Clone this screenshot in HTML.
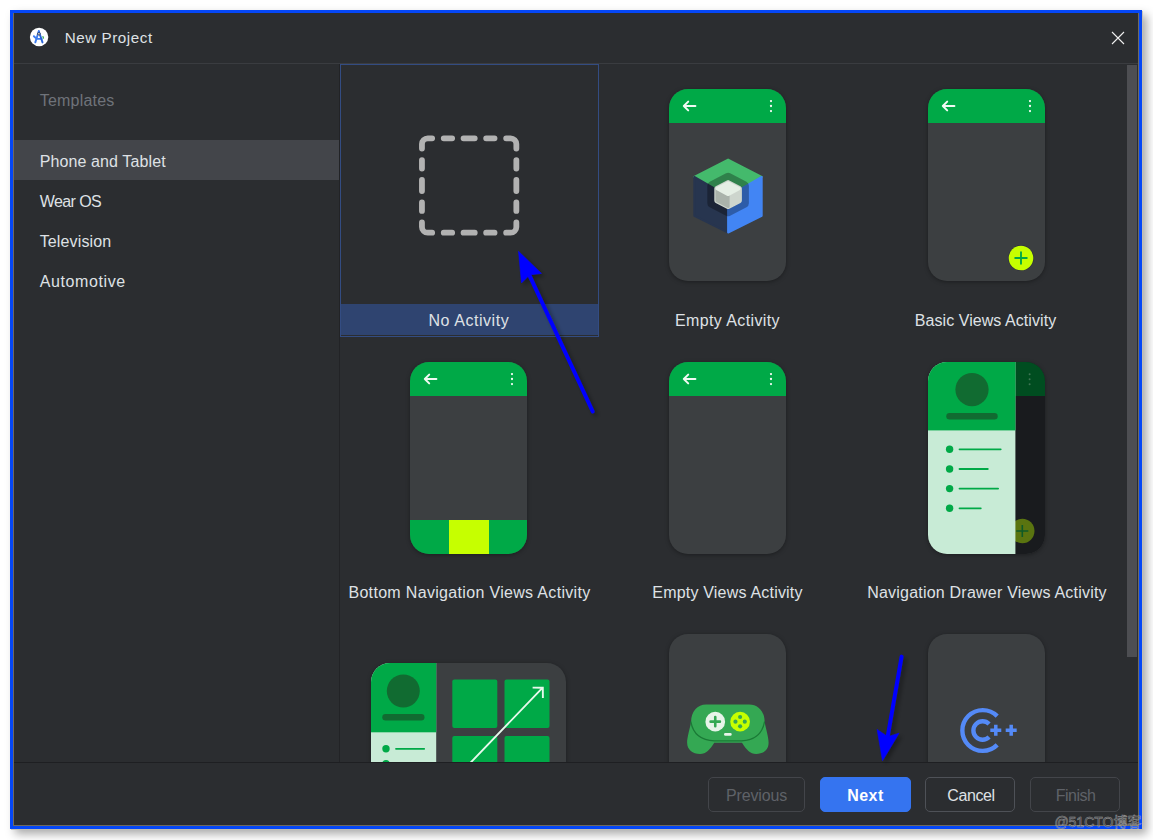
<!DOCTYPE html>
<html lang="en">
<head>
<meta charset="utf-8">
<title>New Project</title>
<style>
*{box-sizing:border-box;margin:0;padding:0}
html,body{width:1153px;height:840px;overflow:hidden;background:#fff}
body{position:relative;font-family:"Liberation Sans","Noto Sans CJK SC",sans-serif;font-size:16px;color:#DFE1E5}
.win{position:absolute;left:10px;top:10px;width:1132px;height:819px;background:#0547F6;box-shadow:1px 1px 0 0 rgba(196,192,178,.85),5px 5px 9px rgba(0,0,0,.34)}
.inner{position:absolute;left:3px;top:3px;width:1126px;height:813px;background:#2B2D30;overflow:hidden}
.edge{position:absolute;left:0;top:0;width:1126px;height:813px;border:1px solid #6E6A60;border-top:none;pointer-events:none}
.abs{position:absolute}
.t{position:absolute;white-space:nowrap;line-height:20px;height:20px}
.titlesep{position:absolute;left:1px;top:50px;width:1124px;height:1px;background:#3A3C40}
.side-sel{position:absolute;left:1px;top:127px;width:325px;height:40px;background:#43454A}
.cell-sel{position:absolute;left:327px;top:51px;width:259px;height:273px;border:1px solid #334C82}
.cell-sel .bar{position:absolute;left:0;top:239px;width:257px;height:31px;background:#2F4470}
.lbl{position:absolute;white-space:nowrap;line-height:20px;height:20px;text-align:center;color:#DFE1E5}
.phone{position:absolute;width:117px;height:192.2px;border-radius:19px;background:#3C3F41;overflow:hidden;box-shadow:0 1px 4px rgba(0,0,0,.35)}
.phone .hd{position:absolute;left:0;top:0;width:100%;height:34px;background:#00A947}
.scroll{position:absolute;left:1114px;top:52px;width:10px;height:592px;background:#4D4E52}
.footer{position:absolute;left:1px;top:749px;width:1124px;height:64px;background:#2B2D30;border-top:1px solid #1E1F22}
.btn{position:absolute;top:764px;height:35px;border-radius:5px;border:1px solid #4E5157;color:#DFE1E5;text-align:center;line-height:35px;font-size:16px}
.btn.dis{color:#5F6268;border-color:#43454A}
.btn.pri{background:#3574F0;border-color:#3574F0;color:#fff;font-weight:bold}
</style>
</head>
<body>
<div class="win"><div class="inner">

<!-- title bar -->
<svg class="abs" style="left:16px;top:14px" width="20" height="20" viewBox="0 0 20 20">
  <circle cx="10.1" cy="10" r="9.2" fill="#fff"/>
  <path d="M9.8 4.3 L6.3 15.4 M7.2 11.9 H12.6 M4.9 9.2 L7.4 11.6" fill="none" stroke="#3D7DF0" stroke-width="1.9" stroke-linecap="round"/>
  <path d="M9.8 4.3 L13.5 15.4" fill="none" stroke="#2A63D8" stroke-width="1.9" stroke-linecap="round"/>
  <path d="M9.8 3.7 L8.8 6.8 H10.8 Z" fill="#3D7DF0" stroke="#3D7DF0" stroke-width=".8" stroke-linejoin="round"/>
  <rect x="8.5" y="5.9" width="2.7" height="1.9" rx=".6" fill="#fff" stroke="#1F2430" stroke-width=".8"/>
  <path d="M13.2 8.9 l1.6 .5 .3 2.4 -1.3 -.3 z" fill="#3DAE54"/>
</svg>
<div class="t" id="ttl" style="left:51.7px;top:15px;font-size:15.2px;letter-spacing:0.56px">New Project</div>
<svg class="abs" style="left:1098px;top:18px" width="14" height="14" viewBox="0 0 14 14"><path d="M1 1 L13 13 M13 1 L1 13" stroke="#F0F0F0" stroke-width="1.1" fill="none"/></svg>
<div class="titlesep"></div>

<!-- sidebar -->
<div class="side-sel"></div>
<div class="t" id="s0" style="left:26.7px;top:78px;color:#6F737A;letter-spacing:0.21px">Templates</div>
<div class="t" id="s1" style="left:26.7px;top:139px;letter-spacing:0.11px">Phone and Tablet</div>
<div class="t" id="s2" style="left:26.7px;top:179px;letter-spacing:-0.57px">Wear OS</div>
<div class="t" id="s3" style="left:26.7px;top:219px;letter-spacing:0.14px">Television</div>
<div class="t" id="s4" style="left:26.7px;top:259px;letter-spacing:0.61px">Automotive</div>

<!-- grid -->
<div class="abs" style="left:326px;top:51px;width:1px;height:698px;background:#222326"></div>
<div class="cell-sel"><div class="bar"></div></div>
<svg class="abs" style="left:401px;top:117px" width="110" height="110" viewBox="0 0 110 110"><g transform="translate(55.15 55.5)" fill="none" stroke="#B2B2B2" stroke-width="5.8" stroke-linecap="round"><path d="M-47.2 -37 V-41.4 A5.8 5.8 0 0 1 -41.4 -47.2 H-37 M-25.4 -47.2 H-17 M-5.6 -47.2 H5.6 M17 -47.2 H25.4"/><g transform="rotate(90)"><path d="M-47.2 -37 V-41.4 A5.8 5.8 0 0 1 -41.4 -47.2 H-37 M-25.4 -47.2 H-17 M-5.6 -47.2 H5.6 M17 -47.2 H25.4"/></g><g transform="rotate(180)"><path d="M-47.2 -37 V-41.4 A5.8 5.8 0 0 1 -41.4 -47.2 H-37 M-25.4 -47.2 H-17 M-5.6 -47.2 H5.6 M17 -47.2 H25.4"/></g><g transform="rotate(270)"><path d="M-47.2 -37 V-41.4 A5.8 5.8 0 0 1 -41.4 -47.2 H-37 M-25.4 -47.2 H-17 M-5.6 -47.2 H5.6 M17 -47.2 H25.4"/></g></g></svg>

<div class="lbl" id="l0" style="left:326.4px;width:259px;top:298px;letter-spacing:0.55px">No Activity</div>
<div class="lbl" id="l1" style="left:585.5px;width:258px;top:298px;letter-spacing:0.39px">Empty Activity</div>
<div class="lbl" id="l2" style="left:843.5px;width:258px;top:298px;letter-spacing:0.06px">Basic Views Activity</div>
<div class="lbl" id="l3" style="left:327.5px;width:258px;top:570px;letter-spacing:0.325px">Bottom Navigation Views Activity</div>
<div class="lbl" id="l4" style="left:585.5px;width:258px;top:570px;letter-spacing:0.2px">Empty Views Activity</div>
<div class="lbl" id="l5" style="left:845px;width:258px;top:570px;letter-spacing:0.22px">Navigation Drawer Views Activity</div>

<!-- phones row 1 -->
<div class="phone" style="left:656.4px;top:76.2px"><div class="hd"></div><svg class="abs" style="left:0;top:0" width="117" height="34" viewBox="0 0 117 34"><path d="M14.8 17 H26.4 M19.2 12.6 L14.8 17 L19.2 21.4" fill="none" stroke="#F1FAF4" stroke-width="2" stroke-linecap="round" stroke-linejoin="round"/><circle cx="102" cy="12.1" r="1.15" fill="#F1FAF4"/><circle cx="102" cy="17" r="1.15" fill="#F1FAF4"/><circle cx="102" cy="22.1" r="1.15" fill="#F1FAF4"/></svg><svg class="abs" style="left:0;top:0" width="117" height="193" viewBox="0 0 117 193">
<defs><clipPath id="hexc"><path d="M58.3 70.6 L91.9 87.9 V126.8 L58.3 143.6 L24.5 126.8 V87.9 Z" stroke-linejoin="round"/></clipPath></defs>
<g transform="translate(0.8 0)"><g stroke-linejoin="round" stroke-width="2">
<path d="M58.3 70.6 L91.9 87.9 L58.3 107.3 L24.5 87.9 Z" fill="#44BA6C" stroke="#44BA6C"/>
<path d="M24.5 87.9 L58.3 107.3 V143.6 L24.5 126.8 Z" fill="#27354F" stroke="#27354F"/>
<path d="M91.9 87.9 L58.3 107.3 V143.6 L91.9 126.8 Z" fill="#4285F4" stroke="#4285F4"/>
</g>
<g opacity=".3"><path d="M58.3 88.3 L74.6 96.8 V114.3 L58.3 122.8 L42 114.3 V96.8 Z" fill="#000" stroke="#000" stroke-width="9" stroke-linejoin="round"/></g>
<defs><filter id="sb" x="-20%" y="-20%" width="140%" height="140%"><feGaussianBlur stdDeviation="0.7"/></filter>
<clipPath id="cubec"><path d="M58.3 91.1 L71.9 98.2 V113 L58.3 120.1 L44.7 113 V98.2 Z"/></clipPath></defs>
<path d="M58.3 93.8 L69.4 99.6 V111.6 L58.3 117.4 L47.2 111.6 V99.6 Z" fill="#CDD5CD" stroke="#CDD5CD" stroke-width="5.4" stroke-linejoin="round"/>
<g filter="url(#sb)" stroke-linejoin="round" stroke-width="3">
<path d="M47.2 100.6 L58.3 106.6 V117.4 L47.2 111.6 Z" fill="#AAB3AB" stroke="#AAB3AB"/>
<path d="M58.3 93.8 L69.4 99.6 L58.3 105.6 L47.2 99.6 Z" fill="#E5EFE5" stroke="#E5EFE5"/>
</g>
</g></svg></div>
<div class="phone" style="left:914.8px;top:76.2px"><div class="hd"></div><svg class="abs" style="left:0;top:0" width="117" height="34" viewBox="0 0 117 34"><path d="M14.8 17 H26.4 M19.2 12.6 L14.8 17 L19.2 21.4" fill="none" stroke="#F1FAF4" stroke-width="2" stroke-linecap="round" stroke-linejoin="round"/><circle cx="102" cy="12.1" r="1.15" fill="#F1FAF4"/><circle cx="102" cy="17" r="1.15" fill="#F1FAF4"/><circle cx="102" cy="22.1" r="1.15" fill="#F1FAF4"/></svg><svg class="abs" style="left:79.6px;top:154.5px" width="28" height="28" viewBox="0 0 28 28"><circle cx="14" cy="14" r="12.9" fill="#22233a" fill-opacity=".55"/><circle cx="14" cy="14" r="12.3" fill="#C6FF00"/><path d="M14 8.2 V19.8 M8.2 14 H19.8" stroke="#00A947" stroke-width="1.9" stroke-linecap="round" fill="none"/></svg></div>
<!-- phones row 2 -->
<div class="phone" style="left:397.4px;top:348.7px"><div class="hd"></div><svg class="abs" style="left:0;top:0" width="117" height="34" viewBox="0 0 117 34"><path d="M14.8 17 H26.4 M19.2 12.6 L14.8 17 L19.2 21.4" fill="none" stroke="#F1FAF4" stroke-width="2" stroke-linecap="round" stroke-linejoin="round"/><circle cx="102" cy="12.1" r="1.15" fill="#F1FAF4"/><circle cx="102" cy="17" r="1.15" fill="#F1FAF4"/><circle cx="102" cy="22.1" r="1.15" fill="#F1FAF4"/></svg><div class="abs" style="left:0;top:158.6px;width:117px;height:34px;background:#00A947"></div><div class="abs" style="left:38.8px;top:158.6px;width:40px;height:34px;background:#C6FF00"></div></div>
<div class="phone" style="left:656.4px;top:348.7px"><div class="hd"></div><svg class="abs" style="left:0;top:0" width="117" height="34" viewBox="0 0 117 34"><path d="M14.8 17 H26.4 M19.2 12.6 L14.8 17 L19.2 21.4" fill="none" stroke="#F1FAF4" stroke-width="2" stroke-linecap="round" stroke-linejoin="round"/><circle cx="102" cy="12.1" r="1.15" fill="#F1FAF4"/><circle cx="102" cy="17" r="1.15" fill="#F1FAF4"/><circle cx="102" cy="22.1" r="1.15" fill="#F1FAF4"/></svg></div>
<div class="phone" style="left:914.8px;top:348.7px"><svg class="abs" style="left:0;top:0" width="117" height="193" viewBox="0 0 117 193">
<rect x="0" y="0" width="117" height="193" fill="#191B1E"/>
<rect x="0" y="0" width="117" height="34" fill="#004D20"/>
<g fill="#3E7554"><circle cx="101.6" cy="12.3" r="1"/><circle cx="101.6" cy="17.3" r="1"/><circle cx="101.6" cy="22.3" r="1"/></g>
<circle cx="94.3" cy="169" r="12.2" fill="#5A7410"/>
<path d="M94.3 163 V175 M88.3 169 H100.3" stroke="#0F5A27" stroke-width="1.6" fill="none"/>
<rect x="0" y="0" width="87.4" height="193" fill="#C8EBD6"/>
<rect x="0" y="0" width="87.4" height="68.4" fill="#00A947"/>
<circle cx="44" cy="27.6" r="16.6" fill="#116B31"/>
<rect x="18.3" y="51" width="51.4" height="6.4" rx="3.2" fill="#116B31"/>
<g fill="#00A947"><circle cx="21.6" cy="87.3" r="3.7"/><circle cx="21.6" cy="107" r="3.7"/><circle cx="21.6" cy="126.6" r="3.7"/><circle cx="21.6" cy="146.3" r="3.7"/></g>
<g stroke="#00A947" stroke-width="1.8" stroke-linecap="round"><path d="M31.5 87.3 H72.7"/><path d="M31.5 107 H59.8"/><path d="M31.5 126.6 H70.1"/><path d="M31.5 146.3 H52.8"/></g>
</svg></div>
<!-- row 3 -->
<div class="phone" style="left:357.9px;top:650.4px;width:195.4px"><svg class="abs" style="left:0;top:0" width="196" height="193" viewBox="0 0 196 193">
<rect x="0" y="0" width="65.2" height="193" fill="#C8EBD6"/>
<rect x="0" y="0" width="65.2" height="69.3" fill="#00A947"/>
<circle cx="32.3" cy="28" r="16.5" fill="#116B31"/>
<rect x="11.3" y="51" width="42.2" height="6.4" rx="3.2" fill="#116B31"/>
<g fill="#00A947"><circle cx="15" cy="85.8" r="3.7"/><circle cx="15" cy="100.6" r="3.7"/></g>
<g stroke="#00A947" stroke-width="1.8" stroke-linecap="round"><path d="M25 85.8 H53.2"/><path d="M25 100.6 H46"/></g>
<g fill="#00A947"><rect x="81.3" y="16.6" width="45" height="48.5" rx="2"/><rect x="133.5" y="16.6" width="45" height="48.5" rx="2"/><rect x="81.3" y="72.9" width="45" height="48.5" rx="2"/><rect x="133.5" y="72.9" width="45" height="48.5" rx="2"/></g>
<path d="M90 109.6 L171.2 25.2 M161.6 24.6 L171.8 24.7 L171.9 34.9" fill="none" stroke="#E6F8EC" stroke-width="1.9" stroke-linecap="butt" stroke-linejoin="miter"/>
</svg></div>
<div class="phone" style="left:656.4px;top:621.1px"><svg class="abs" style="left:0;top:0" width="117" height="193" viewBox="0 0 117 193">
<g transform="translate(-9.5 -9) scale(0.17262)">
<path d="M183 560 C176 600 160 650 160 682 C160 722 192 747 235 747 C270 747 292 722 317 682 L478 682 C503 722 525 747 560 747 C603 747 632 722 632 682 C632 650 616 600 609 560 C609 500 570 460 520 460 L270 460 C220 460 183 500 183 560 Z" fill="#34A853"/>
<path d="M182 562 C196 636 246 668 318 671 L476 671 C548 668 594 636 608 562" fill="none" stroke="#1A7A36" stroke-width="7.5" stroke-linecap="round"/>
<circle cx="323" cy="560" r="57" fill="#E7F4E9"/>
<path d="M323 533 V587 M296 560 H350" stroke="#34A853" stroke-width="15" stroke-linecap="round" fill="none"/>
<circle cx="467" cy="560" r="57" fill="#C6FF00"/>
<g fill="#34A853"><circle cx="467" cy="533" r="12"/><circle cx="467" cy="587" r="12"/><circle cx="440" cy="560" r="12"/><circle cx="494" cy="560" r="12"/></g>
<rect x="374" y="625" width="44" height="16" rx="7" fill="#E7F4E9"/>
</g>
</svg></div>
<div class="phone" style="left:914.8px;top:621.1px"><svg class="abs" style="left:0;top:0" width="117" height="193" viewBox="0 0 117 193">
<g fill="none" stroke="#548AF7" stroke-linecap="butt">
<path d="M69.2 82.1 A20.4 20.4 0 1 0 69.2 110.9" stroke-width="4.4"/>
<path d="M61.1 90 A9.2 9.2 0 1 0 61.1 103" stroke-width="4.4"/>
<path d="M67.8 90.8 V101.8 M62.3 96.3 H73.3 M83.2 90.8 V101.8 M77.7 96.3 H88.7" stroke-width="3.5"/>
</g>
</svg></div>

<div class="scroll"></div>

<!-- footer -->
<div class="footer"></div>
<div class="btn dis" id="b0" style="left:695px;width:97px;letter-spacing:-0.15px">Previous</div>
<div class="btn pri" id="b1" style="left:807px;width:91px;letter-spacing:0.45px">Next</div>
<div class="btn" id="b2" style="left:912px;width:90px;text-indent:2px;letter-spacing:-0.37px">Cancel</div>
<div class="btn dis" id="b3" style="left:1017px;width:90px;text-indent:1px;letter-spacing:-0.5px">Finish</div>
<div class="edge"></div>
</div></div>

<svg class="abs" style="left:0;top:0;pointer-events:none" width="1153" height="840" viewBox="0 0 1153 840">
<defs><filter id="ash" x="-30%" y="-30%" width="160%" height="160%"><feGaussianBlur in="SourceAlpha" stdDeviation="2.2"/><feOffset dx="2.5" dy="2.5"/><feComponentTransfer><feFuncA type="linear" slope=".34"/></feComponentTransfer><feMerge><feMergeNode/><feMergeNode in="SourceGraphic"/></feMerge></filter></defs>
<g filter="url(#ash)" fill="#0000FF" stroke="#0000FF">
<path d="M592.7 411.5 L528.6 273.5" stroke-width="4" stroke-linecap="round" fill="none"/>
<path d="M518.5 251.3 L541.4 273.4 L529.6 274.8 L521.5 282.9 Z" stroke-width=".6" stroke-linejoin="round"/>
</g>
<g filter="url(#ash)" fill="#0000FF" stroke="#0000FF">
<path d="M901.6 656.6 L887.6 737" stroke-width="4" stroke-linecap="round" fill="none"/>
<path d="M882.5 760.7 L877.1 729.4 L887.9 736.7 L899 733.2 Z" stroke-width=".6" stroke-linejoin="round"/>
</g>
<text x="1054.4" y="826.8" font-family="'Liberation Sans','Noto Sans CJK SC',sans-serif" font-size="13.8" font-weight="normal" fill="#26272a" fill-opacity=".55" stroke="#f4f4f4" stroke-opacity=".5" stroke-width=".55" textLength="87" lengthAdjust="spacingAndGlyphs" id="wm">@51CTO博客</text>
</svg>
</body>
</html>
